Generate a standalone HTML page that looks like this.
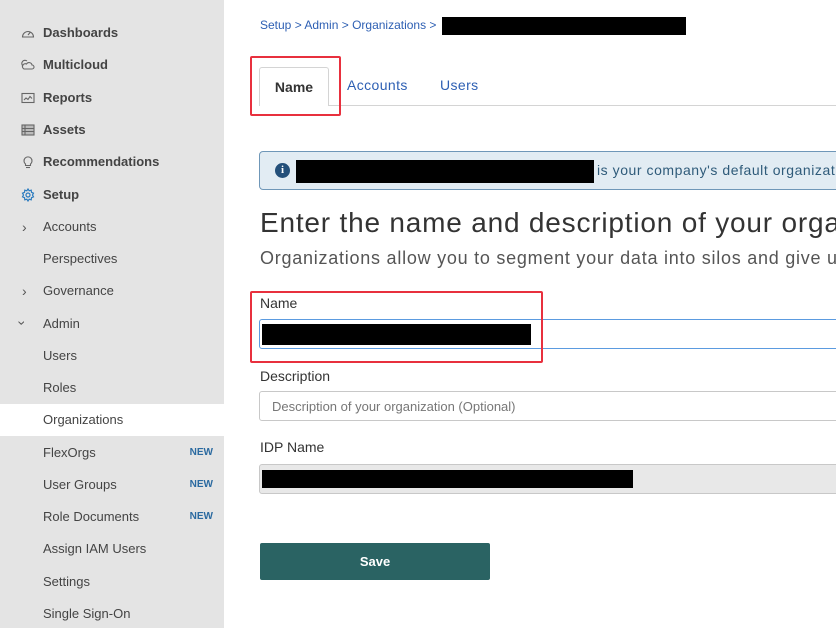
<!DOCTYPE html>
<html><head><style>
*{box-sizing:border-box;margin:0;padding:0}
html,body{overflow:hidden}
body{width:836px;height:628px;overflow:hidden;background:#fff;font-family:"Liberation Sans",sans-serif;position:relative;color:#333}
.sb{position:absolute;left:0;top:0;width:224px;height:628px;background:#e4e4e4}
.it{position:absolute;left:0;width:224px;height:32px;line-height:32px;font-size:13px;color:#444;padding-left:43px}
.it.b{font-weight:bold;color:#444}
.ic{position:absolute;left:21px;top:9px;width:14px;height:14px}
.new{position:absolute;right:11px;top:0;font-size:10px;font-weight:bold;color:#2b6aa0}
.a{position:absolute}
.blk{position:absolute;background:#000}
.lbl{position:absolute;left:260px;font-size:14px;color:#333}
.inp{position:absolute;left:259px;width:600px;height:30px;border:1px solid #c8c8c8;border-radius:3px}
.clip{position:absolute;left:0;top:0;width:836px;height:628px;overflow:hidden}
</style></head><body><div class="clip">
<div class="sb">
<div class="it b" style="top:17px"><svg class="ic" viewBox="0 0 14 14" fill="none" stroke="#666" stroke-width="1.1"><path d="M1.5 11A5.5 5.5 0 1 1 12.5 11Z"/><path d="M7 9l2.5-3"/></svg>Dashboards</div>
<div class="it b" style="top:49px"><svg class="ic" viewBox="0 0 14 14" fill="none" stroke="#666" stroke-width="1.1"><path d="M3 11h8a2 2 0 0 0 0-4 3 3 0 0 0-5.5-1A2.5 2.5 0 0 0 3 11z"/><path d="M2 8a3 3 0 0 1 4-5"/></svg>Multicloud</div>
<div class="it b" style="top:82px"><svg class="ic" viewBox="0 0 14 14" fill="none" stroke="#666" stroke-width="1.1"><rect x="1" y="2.5" width="12" height="9"/><path d="M3 9l2-2 2 1.5 2-3 2 2"/></svg>Reports</div>
<div class="it b" style="top:114px"><svg class="ic" viewBox="0 0 14 14" fill="none" stroke="#666" stroke-width="1.1"><rect x="1" y="2" width="12" height="10" fill="#bbb"/><path d="M1 5.5h12M1 8.5h12M4 2v10"/></svg>Assets</div>
<div class="it b" style="top:146px"><svg class="ic" viewBox="0 0 14 14" fill="none" stroke="#666" stroke-width="1.1"><path d="M4.5 9A4 4 0 1 1 9.5 9v1.5h-5z"/><path d="M5 12.5h4"/></svg>Recommendations</div>
<div class="it b" style="top:179px"><svg class="ic" viewBox="0 0 14 14" fill="none" stroke="#2b7bbf" stroke-width="1.2"><circle cx="7" cy="7" r="2"/><path d="M7 1l1.2 1.8 2-.6.3 2.1 2 .9-1 1.8 1 1.8-2 .9-.3 2.1-2-.6L7 13l-1.2-1.8-2 .6-.3-2.1-2-.9 1-1.8-1-1.8 2-.9.3-2.1 2 .6z"/></svg>Setup</div>
<div class="it" style="top:211px"><span class="a" style="left:22px;top:0;font-size:14px;color:#555">›</span>Accounts</div>
<div class="it" style="top:243px">Perspectives</div>
<div class="it" style="top:275px"><span class="a" style="left:22px;top:0;font-size:14px;color:#555">›</span>Governance</div>
<div class="it" style="top:308px"><span class="a" style="left:20px;top:-1px;font-size:14px;color:#555;transform:rotate(90deg)">›</span>Admin</div>
<div class="it" style="top:340px">Users</div>
<div class="it" style="top:372px">Roles</div>
<div class="it" style="top:404px;background:#fff">Organizations</div>
<div class="it" style="top:437px">FlexOrgs<span class="new">NEW</span></div>
<div class="it" style="top:469px">User Groups<span class="new">NEW</span></div>
<div class="it" style="top:501px">Role Documents<span class="new">NEW</span></div>
<div class="it" style="top:533px">Assign IAM Users</div>
<div class="it" style="top:566px">Settings</div>
<div class="it" style="top:598px">Single Sign-On</div>
</div>

<div class="a" style="left:260px;top:18px;font-size:12px;color:#2d5fb3">Setup &gt; Admin &gt; Organizations &gt;</div>
<div class="blk" style="left:442px;top:17px;width:244px;height:18px"></div>

<div class="a" style="left:259px;top:105px;width:577px;height:1px;background:#d4d4d4"></div>
<div class="a" style="left:259px;top:67px;width:70px;height:39px;border:1px solid #d4d4d4;border-bottom:none;border-radius:3px 3px 0 0;background:#fff;text-align:center;line-height:38px;font-size:14px;font-weight:bold;color:#333">Name</div>
<div class="a" style="left:347px;top:77px;font-size:14px;color:#2d5fb3;letter-spacing:0.4px">Accounts</div>
<div class="a" style="left:440px;top:77px;font-size:14px;color:#2d5fb3;letter-spacing:0.4px">Users</div>
<div class="a" style="left:250px;top:56px;width:91px;height:60px;border:2px solid #e8303e;border-radius:2px"></div>

<div class="a" style="left:259px;top:151px;width:600px;height:39px;background:#e2ecf3;border:1px solid #6f97b8;border-radius:4px"></div>
<div class="a" style="left:275px;top:163px;width:15px;height:15px;border-radius:50%;background:#24507a;color:#fff;font-size:11px;font-weight:bold;text-align:center;line-height:15px;font-family:'Liberation Serif',serif">i</div>
<div class="blk" style="left:296px;top:160px;width:298px;height:23px"></div>
<div class="a" style="left:597px;top:162px;font-size:14px;color:#2f5b7a;white-space:nowrap;letter-spacing:0.55px">is your company's default organization</div>

<div class="a" style="left:260px;top:207px;font-size:28px;color:#333;white-space:nowrap;letter-spacing:0.8px">Enter the name and description of your organization</div>
<div class="a" style="left:260px;top:248px;font-size:18px;color:#555;white-space:nowrap;letter-spacing:0.75px">Organizations allow you to segment your data into silos and give users</div>

<div class="lbl" style="top:295px">Name</div>
<div class="inp" style="top:319px;border-color:#5b9be0;height:30px"></div>
<div class="blk" style="left:262px;top:324px;width:269px;height:21px"></div>
<div class="a" style="left:250px;top:291px;width:293px;height:72px;border:2px solid #e8303e;border-radius:2px"></div>

<div class="lbl" style="top:368px">Description</div>
<div class="inp" style="top:391px"></div>
<div class="a" style="left:272px;top:399px;font-size:13px;color:#777">Description of your organization (Optional)</div>

<div class="lbl" style="top:439px">IDP Name</div>
<div class="inp" style="top:464px;background:#e8e8e8"></div>
<div class="blk" style="left:262px;top:470px;width:371px;height:18px"></div>

<div class="a" style="left:260px;top:543px;width:230px;height:37px;background:#2a6363;border-radius:2px;color:#fff;font-weight:bold;font-size:13px;text-align:center;line-height:37px">Save</div>
</div></body></html>
